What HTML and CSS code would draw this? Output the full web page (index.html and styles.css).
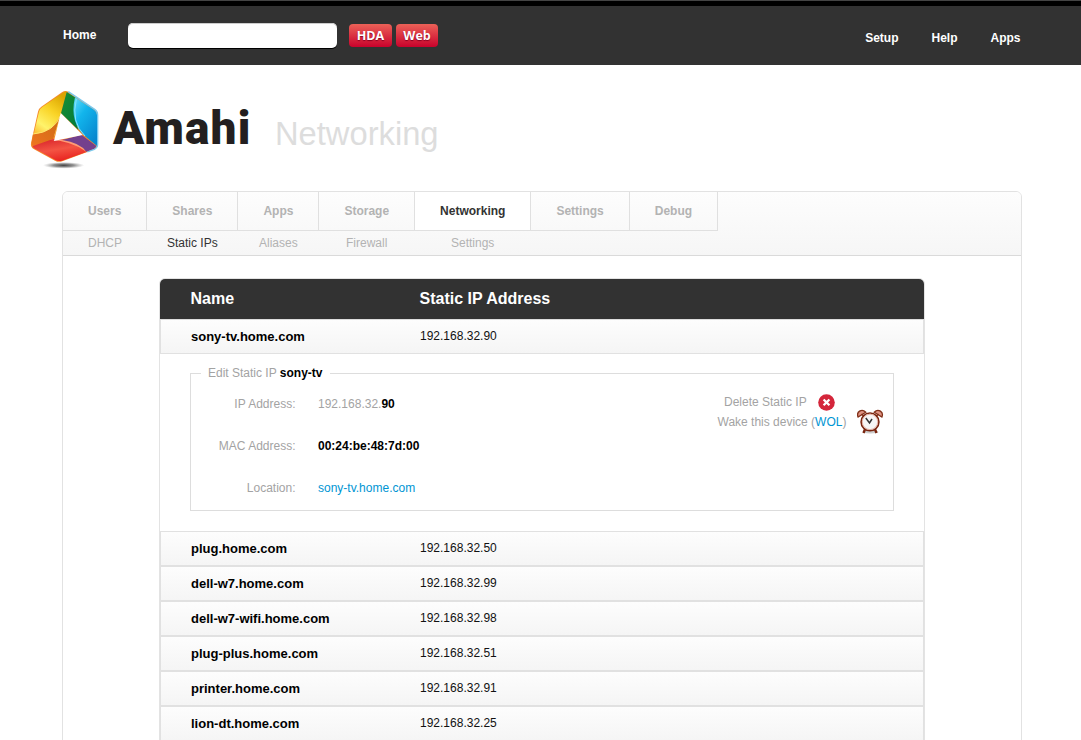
FILE: index.html
```html
<!DOCTYPE html>
<html lang="en">
<head>
<meta charset="utf-8">
<title>Amahi - Networking</title>
<link rel="stylesheet" href="styles.css">
</head>
<body>
<header class="topbar">
  <a class="home">Home</a>
  <input class="search" type="text" aria-label="Search">
  <button class="btn btn-hda">HDA</button>
  <button class="btn btn-web">Web</button>
  <nav class="topnav"><a>Setup</a><a>Help</a><a>Apps</a></nav>
</header>
<div class="brand">
  <svg class="logo" viewBox="0 0 240 255" width="80" height="85" aria-hidden="true">
    <defs>
      <linearGradient id="y" x1=".7" y1="0" x2=".2" y2="1"><stop offset="0" stop-color="#dba400"/><stop offset=".35" stop-color="#f9d325"/><stop offset=".68" stop-color="#fff36b"/><stop offset="1" stop-color="#f8a51b"/></linearGradient>
      <linearGradient id="o" x1="0" y1="1" x2="1" y2="0"><stop offset="0" stop-color="#ef7420"/><stop offset="1" stop-color="#c96b14"/></linearGradient>
      <linearGradient id="b" x1="0" y1="0" x2=".7" y2="1"><stop offset="0" stop-color="#64dcfa"/><stop offset=".4" stop-color="#12b5ec"/><stop offset="1" stop-color="#0687cf"/></linearGradient>
      <linearGradient id="r" x1=".2" y1="0" x2=".6" y2="1"><stop offset="0" stop-color="#d9252b"/><stop offset=".5" stop-color="#f35443"/><stop offset="1" stop-color="#e8211e"/></linearGradient>
      <linearGradient id="g" x1="0" y1="0" x2="1" y2="1"><stop offset="0" stop-color="#169034"/><stop offset="1" stop-color="#04773a"/></linearGradient>
      <radialGradient id="s"><stop offset="0" stop-color="#444"/><stop offset=".5" stop-color="#777" stop-opacity=".8"/><stop offset="1" stop-color="#aaa" stop-opacity="0"/></radialGradient>
    </defs>
    <ellipse cx="116" cy="241" rx="62" ry="10" fill="url(#s)"/>
    <path d="M130 20L209 73Q219 79 219 91L219 177Q219 187 209 193L112 229Q100 233 90 227L26 192Q16 186 18 174L39 80Q41 70 49 65L112 21Q121 15 130 20Z" fill="#f58a2a"/>
    <path d="M125 20L108 85L89 150L80 166L20 173L42 80Q44 71 52 66L113 24Q120 19 125 20Z" fill="url(#y)"/>
    <path d="M107 86L84 164L26 185Q19 181 20 173L24 147Q86 143 107 86Z" fill="url(#o)"/>
    <path d="M24 147Q88 142 107 90" fill="none" stroke="#ffe66e" stroke-width="3"/>
    <path d="M125 21L153 39Q142 90 160 135L108 85Z" fill="url(#g)"/>
    <path d="M150 37L208 75Q217 81 217 91V184L184 157Q132 115 150 37Z" fill="url(#b)"/>
    <path d="M154 42Q137 112 180 153" fill="none" stroke="#83e4fb" stroke-width="3"/>
    <path d="M22 184L84 162Q145 158 184 201L111 227Q100 230 91 225L27 190Z" fill="url(#r)"/>
    <path d="M74 164L128 165Q168 173 184 200Q142 168 74 164Z" fill="#ff9b74"/>
    <path d="M112 165L169 149L214 183Q213 189 205 193L184 200Q164 173 112 165Z" fill="#74408d"/>
    <path d="M130 20L209 73Q218 79 218 91V177Q218 188 208 193L187 201" fill="none" stroke="#79c9ef" stroke-width="4"/>
    <path d="M107 84L173 150L87 168Z" fill="#fff"/>
  </svg>
  <span class="wordmark">Amahi</span>
  <h1 class="title">Networking</h1>
</div>
<main class="panel">
  <div class="nav">
    <nav class="tabs"><a>Users</a><a>Shares</a><a>Apps</a><a>Storage</a><a class="active">Networking</a><a>Settings</a><a>Debug</a></nav>
    <nav class="subtabs"><a class="dhcp">DHCP</a><a class="static active">Static IPs</a><a class="aliases">Aliases</a><a class="firewall">Firewall</a><a>Settings</a></nav>
  </div>
  <section class="table">
    <div class="thead"><span class="name">Name</span><span>Static IP Address</span></div>
    <div class="row"><b class="name">sony-tv.home.com</b><span>192.168.32.90</span></div>
    <div class="detail">
      <fieldset class="edit">
        <legend>Edit Static IP <b>sony-tv</b></legend>
        <div class="edit-body">
          <dl class="fields">
            <dt>IP Address:</dt><dd>192.168.32.<b>90</b></dd>
            <dt>MAC Address:</dt><dd><b>00:24:be:48:7d:00</b></dd>
            <dt>Location:</dt><dd><a class="link">sony-tv.home.com</a></dd>
          </dl>
          <div class="actions">
            <div class="delete">Delete Static IP
              <svg width="17" height="17" viewBox="0 0 17 17"><circle cx="8.5" cy="8.5" r="8.3" fill="#d4263b"/><path d="M5.6 5.5L11.4 11.3M11.4 5.5L5.6 11.3" stroke="#fff" stroke-width="2.3"/></svg>
            </div>
            <div class="wake"><span>Wake this device (<a class="link">WOL</a>)</span>
              <svg class="clock" width="27" height="26" viewBox="0 0 27 26">
                <ellipse cx="13.5" cy="24" rx="8" ry="1.5" fill="#ccc"/>
                <path d="M8.1 21L6.5 25M17.9 21L19.5 25" stroke="#79250f" stroke-width="2.4"/>
                <path d="M1.1 9C-1 4 4.7 0 8.8 4.2ZM24.9 9C27 4 21.3 0 17.2 4.2Z" fill="#df9484" stroke="#813018" stroke-width="1.3"/>
                <path d="M4.5 6L7 8.5M21.5 6L19 8.5" stroke="#813018" stroke-width="1.4"/>
                <circle cx="13" cy="13.9" r="8.9" fill="#f7f6f6" stroke="#79250f" stroke-width="1.6"/>
                <circle cx="13" cy="13.9" r="7.7" fill="none" stroke="#e0a292" stroke-width=".8"/>
                <path d="M8.8 10L12.5 15L15 11" fill="none" stroke="#333" stroke-width="1.5"/>
              </svg>
            </div>
          </div>
        </div>
      </fieldset>
    </div>
    <div class="row"><b class="name">plug.home.com</b><span>192.168.32.50</span></div>
    <div class="row"><b class="name">dell-w7.home.com</b><span>192.168.32.99</span></div>
    <div class="row"><b class="name">dell-w7-wifi.home.com</b><span>192.168.32.98</span></div>
    <div class="row"><b class="name">plug-plus.home.com</b><span>192.168.32.51</span></div>
    <div class="row"><b class="name">printer.home.com</b><span>192.168.32.91</span></div>
    <div class="row"><b class="name">lion-dt.home.com</b><span>192.168.32.25</span></div>
  </section>
</main>
</body>
</html>
```
FILE: styles.css
```css
* { box-sizing: border-box; }
body { margin: 0; height: 740px; overflow: hidden; background: #fff; font: 12px/14px "Liberation Sans", Arial, sans-serif; color: #a3a3a3; }
.topbar { height: 65px; display: flex; align-items: flex-start; padding-left: 63px; background: linear-gradient(#444 0 1px, #000 1px 6px, #323232 6px); color: #fff; font-weight: bold; }
.home { width: 65px; margin-top: 28px; }
.search { width: 209px; height: 25px; margin: 23px 12px 0 0; padding: 0 6px; border: 0; border-radius: 5px; background: #fff; box-shadow: 0 1px 0 #000, inset 0 1px 0 #ccc; }
.btn { height: 23px; margin: 24px 4px 0 0; padding: 0; border: 0; border-radius: 4px; background: linear-gradient(#eb6157, #c9022c); color: #fff; font: bold 12.5px/23px "Open Sans", sans-serif; text-shadow: 0 1px 1px #802; }
.btn-hda { width: 43px; }
.btn-web { width: 42px; }
.topnav { display: flex; gap: 33px; margin: 31px 60.5px 0 auto; }
.brand { height: 126px; display: flex; align-items: flex-start; padding-left: 25px; }
.logo { margin-top: 20px; flex: none; }
.wordmark { width: 170px; margin: 33px 0 0 8px; color: #231f20; font: 900 46px/61px Roboto, sans-serif; letter-spacing: 1.1px; }
.title { margin: 50px 0 0 -8px; color: #ddd; font-size: 32.7px; line-height: 38px; font-weight: normal; }
.panel { width: 960px; height: 560px; margin-left: 62px; border: 1px solid #e2e2e2; border-radius: 6px 6px 0 0; }
.nav { height: 64px; border-bottom: 1px solid #dadada; border-radius: 5px 5px 0 0; background: linear-gradient(#fdfdfd, #f6f6f6); }
.tabs { display: flex; width: max-content; height: 39px; border-bottom: 1px solid #e0e0e0; font-weight: bold; color: #b3b3b3; }
.tabs a { padding: 12px 25px 0; border-right: 1px solid #e0e0e0; }
.tabs .active { background: #fff; color: #333; }
.subtabs { display: flex; padding: 5px 0 0 25px; color: #b3b3b3; }
.subtabs .active { color: #333; }
.dhcp { width: 79px; }
.static { width: 92px; }
.aliases { width: 87px; }
.firewall { width: 105px; }
.table { width: 766px; margin: 22px 0 0 96px; border: 1px solid #e3e3e3; border-radius: 6px 6px 0 0; }
.thead { height: 41px; display: flex; padding: 11px 0 0 30.5px; background: #323232; border-bottom: 1px solid #ddd; border-radius: 5px 5px 0 0; color: #fff; font-size: 16px; line-height: 18px; font-weight: bold; }
.name { width: 229px; }
.row { height: 35px; display: flex; padding: 9px 0 0 30px; border: 1px solid #e1e1e1; background: linear-gradient(#fdfdfd, #f5f5f5); color: #111; }
.row .name { color: #000; font-size: 13px; line-height: 16px; }
.thead + .row { height: 34px; border-top: 0; }
.detail { height: 177px; padding: 12px 30px 0; }
.edit { width: 704px; height: 145px; margin: 0; padding: 0; border: 1px solid #ddd; min-width: 0; }
.edit legend { margin-left: 10px; padding: 0 7px; }
.edit b { color: #000; }
.edit-body { display: flex; }
.fields { display: grid; grid-template-columns: 104.5px 160px; column-gap: 22.5px; grid-auto-rows: 42px; margin: 17px 0 0; }
.fields dt { text-align: right; }
.fields dd { margin: 0; }
.link { color: #0095d3; }
.actions { width: 168px; margin: 12px 9.5px 0 auto; }
.delete { height: 20px; display: flex; gap: 11px; padding-left: 8.5px; align-items: center; }
.wake { display: flex; justify-content: space-between; padding: 3px 0 0 2px; }
.clock { margin-top: -7px; }
```
